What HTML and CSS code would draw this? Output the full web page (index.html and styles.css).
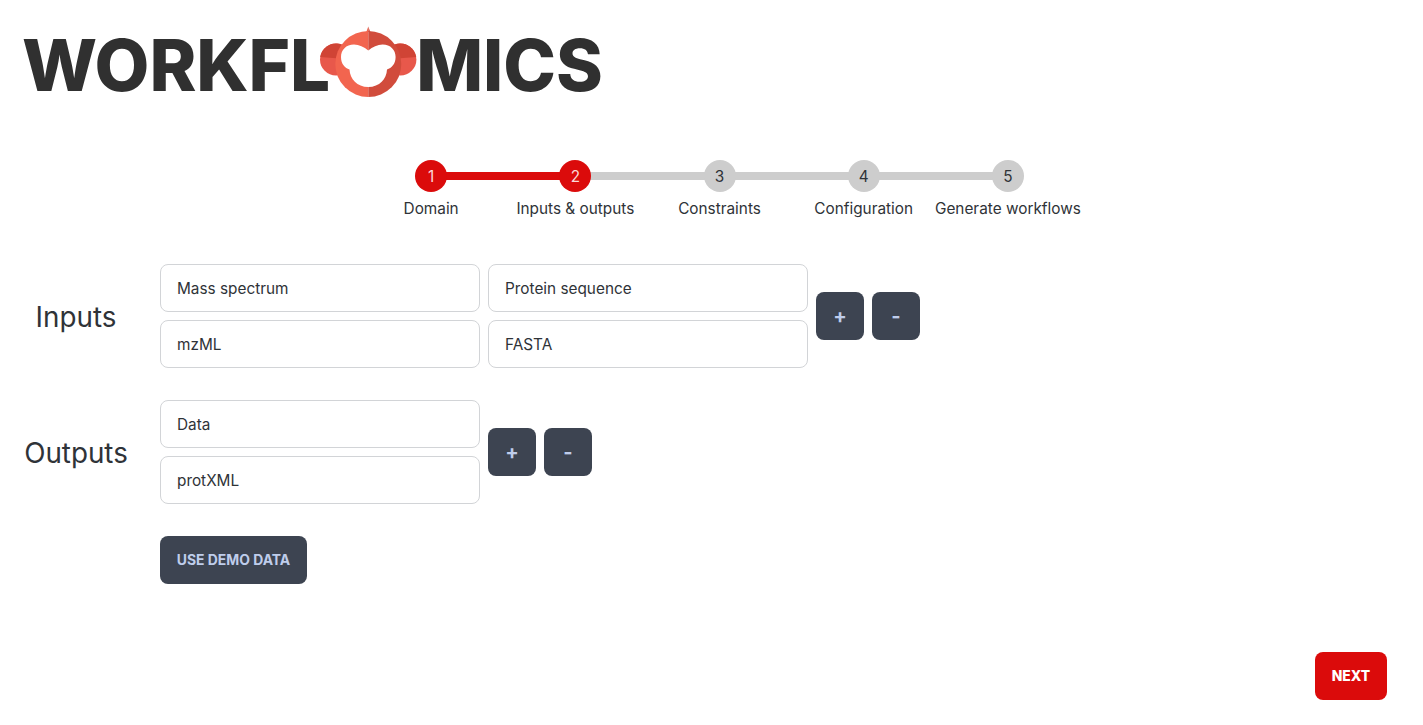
FILE: index.html
```html
<!DOCTYPE html>
<html lang="en">
<head>
<meta charset="utf-8">
<title>Workflomics</title>
<link rel="stylesheet" href="styles.css">
</head>
<body>
<header class="brand">
  <span class="word">WORKFL</span>
  <svg class="mark" viewBox="0 0 106 80" width="106" height="80" aria-hidden="true">
    <circle cx="21" cy="37.5" r="16" fill="#e8584b"/>
    <path d="M5.2 35 A16 16 0 0 1 37 37.5 Z" fill="#d04435"/>
    <circle cx="85.4" cy="37.5" r="16" fill="#e8584b"/>
    <path d="M101.2 35 A16 16 0 0 0 69.4 37.5 Z" fill="#d04435"/>
    <path d="M53.3 4.5 L51.3 10 L53.3 10 Z" fill="#f2654f"/>
    <path d="M53.3 4.5 L55.3 10 L53.3 10 Z" fill="#d14c3c"/>
    <path d="M53.3 9 A33 33 0 0 0 53.3 75 Z" fill="#f2654f"/>
    <path d="M53.3 9 A33 33 0 0 1 53.3 75 Z" fill="#d14c3c"/>
    <path d="M53.3 28.5 C49 25 44 22.5 39 22.5 C31 22.5 26 28 26 35 C26 42 30 46 34.5 47.5 C35 57 42 65 53.3 65 C64.6 65 71.6 57 72 47.5 C76.5 46 80.6 42 80.6 35 C80.6 28 75.6 22.5 67.6 22.5 C62.6 22.5 57.6 25 53.3 28.5 Z" fill="#fff"/>
  </svg>
  <span class="word">MICS</span>
</header>
<ol class="steps">
  <li class="step done"><span class="dot">1</span><span class="step-name">Domain</span></li>
  <li class="step done"><span class="dot">2</span><span class="step-name">Inputs &amp; outputs</span></li>
  <li class="step"><span class="dot">3</span><span class="step-name">Constraints</span></li>
  <li class="step"><span class="dot">4</span><span class="step-name">Configuration</span></li>
  <li class="step"><span class="dot">5</span><span class="step-name">Generate workflows</span></li>
</ol>
<main class="form">
  <section class="io-row">
    <h2 class="io-label">Inputs</h2>
    <div class="pair">
      <div class="field">Mass spectrum</div>
      <div class="field">mzML</div>
    </div>
    <div class="pair">
      <div class="field">Protein sequence</div>
      <div class="field">FASTA</div>
    </div>
    <button class="btn square">+</button>
    <button class="btn square">-</button>
  </section>
  <section class="io-row">
    <h2 class="io-label">Outputs</h2>
    <div class="pair">
      <div class="field">Data</div>
      <div class="field">protXML</div>
    </div>
    <button class="btn square">+</button>
    <button class="btn square">-</button>
  </section>
  <button class="btn demo">USE DEMO DATA</button>
</main>
<footer class="actions">
  <button class="btn next">NEXT</button>
</footer>
</body>
</html>
```
FILE: styles.css
```css
* { box-sizing: border-box; }
html, body { margin: 0; padding: 0; }
body {
  width: 1423px;
  height: 725px;
  overflow: hidden;
  background: #fff;
  color: #2f3338;
  font-family: Inter, "Liberation Sans", sans-serif;
  font-size: 15.35px;
}
.brand {
  display: flex;
  align-items: center;
  height: 80px;
  margin-top: 22px;
  padding-left: 22px;
  color: #303030;
}
.word {
  padding-top: 6px;
  font-family: Inter, sans-serif;
  font-weight: 800;
  font-size: 71px;
  line-height: 74px;
  letter-spacing: -0.1px;
}
.mark { flex: none; margin-left: -15px; margin-right: -5px; }
.steps {
  list-style: none;
  display: flex;
  justify-content: center;
  margin: 58px 0 0;
  padding: 0 0 0 16px;
}
.step {
  position: relative;
  width: 144.2px;
  display: flex;
  flex-direction: column;
  align-items: center;
}
.step::before {
  content: "";
  position: absolute;
  top: 12px;
  left: -50%;
  width: 100%;
  height: 8px;
  background: #cdcdcd;
}
.step:first-child::before { display: none; }
.step.done::before { background: #db0b0b; }
.dot {
  position: relative;
  z-index: 1;
  width: 32px;
  height: 32px;
  border-radius: 50%;
  display: flex;
  align-items: center;
  justify-content: center;
  background: #cdcdcd;
  color: #2f3338;
}
.done .dot { background: #db0b0b; color: #fbd9d9; }
.step-name { margin-top: 7px; line-height: 20px; white-space: nowrap; }
.form {
  display: flex;
  flex-direction: column;
  align-items: flex-start;
  gap: 32px;
  margin-top: 45px;
}
.io-row { display: flex; align-items: center; gap: 8px; }
.io-label {
  width: 152px;
  margin: 0;
  padding-top: 2px;
  text-align: center;
  font-size: 27.8px;
  font-weight: 400;
}
.pair { display: flex; flex-direction: column; gap: 8px; }
.field {
  width: 320px;
  height: 48px;
  padding: 0 16px;
  display: flex;
  align-items: center;
  border: 1px solid #d2d4d7;
  border-radius: 8px;
  background: #fff;
}
.btn {
  height: 48px;
  padding: 0;
  border: 0;
  border-radius: 8px;
  background: #3d4451;
  color: #bfcdeb;
  font-family: Inter, "Liberation Sans", sans-serif;
  font-size: 13.9px;
  font-weight: 700;
}
.square { width: 48px; font-size: 20px; }
.demo { width: 147px; margin-left: 160px; }
.actions {
  display: flex;
  justify-content: flex-end;
  margin-top: 68px;
  padding-right: 36px;
}
.next { width: 72px; background: #db0b0b; color: #fff; font-weight: 800; }
```
